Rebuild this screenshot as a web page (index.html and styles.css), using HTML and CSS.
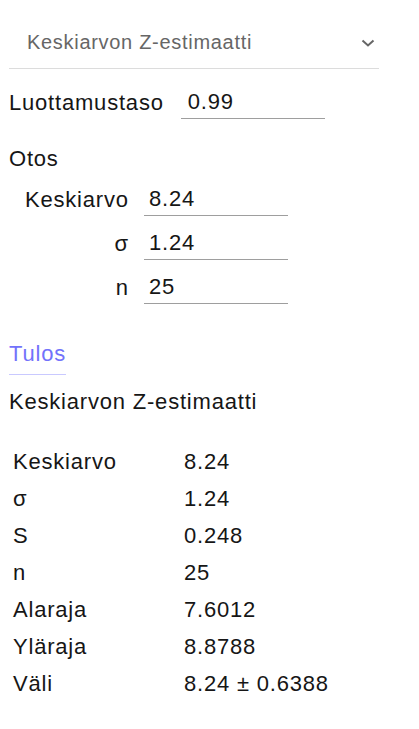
FILE: index.html
```html
<!DOCTYPE html>
<html lang="fi">
<head>
<meta charset="utf-8">
<title>Keskiarvon Z-estimaatti</title>
<link rel="stylesheet" href="styles.css">
</head>
<body>
<div class="app">
  <div class="select">
    <span class="select-text">Keskiarvon Z-estimaatti</span>
    <svg class="chevron" width="14" height="8" viewBox="0 0 14 8"><path d="M1.5 1.5 L7 6.5 L12.5 1.5" fill="none" stroke="#666" stroke-width="2"/></svg>
  </div>

  <div class="conf-row">
    <span class="label">Luottamustaso</span>
    <input class="field" type="text" value="0.99">
  </div>

  <div class="section-title">Otos</div>
  <div class="sample-grid">
    <span class="slabel">Keskiarvo</span>
    <input class="field" type="text" value="8.24">
    <span class="slabel">σ</span>
    <input class="field" type="text" value="1.24">
    <span class="slabel">n</span>
    <input class="field" type="text" value="25">
  </div>

  <div class="tab">Tulos</div>
  <div class="result-title">Keskiarvon Z-estimaatti</div>

  <table class="results">
    <tr><td>Keskiarvo</td><td>8.24</td></tr>
    <tr><td>σ</td><td>1.24</td></tr>
    <tr><td>S</td><td>0.248</td></tr>
    <tr><td>n</td><td>25</td></tr>
    <tr><td>Alaraja</td><td>7.6012</td></tr>
    <tr><td>Yläraja</td><td>8.8788</td></tr>
    <tr><td>Väli</td><td>8.24 ± 0.6388</td></tr>
  </table>
</div>
</body>
</html>
```
FILE: styles.css
```css
html, body {
  margin: 0;
  padding: 0;
  background: #fff;
}
body {
  font-family: "Liberation Sans", Arial, sans-serif;
  font-size: 22px;
  letter-spacing: 0.8px;
  color: #161616;
}
.app {
  width: 370px;
  padding: 0 9px;
}
.select {
  margin-top: 16px;
  height: 52px;
  border-bottom: 1px solid #dcdcdc;
  display: flex;
  align-items: center;
  justify-content: space-between;
  padding: 0 4px 0 18px;
}
.select-text {
  font-size: 20px;
  letter-spacing: 0.7px;
  color: #666;
  line-height: 24px;
}
.chevron {
  display: block;
  margin-top: 2px;
}
.conf-row {
  margin-top: 17px;
  display: flex;
  align-items: center;
  gap: 17px;
}
.label {
  line-height: 25px;
}
.field {
  box-sizing: border-box;
  width: 144px;
  height: 33px;
  margin: 0;
  padding: 0 0 0 7px;
  border: none;
  border-bottom: 1px solid #9e9e9e;
  font-family: inherit;
  font-size: 22px;
  letter-spacing: 0.8px;
  color: #161616;
  background: transparent;
  outline: none;
}
.sample-grid .field {
  padding-left: 5px;
}
.section-title {
  margin-top: 27px;
  line-height: 25px;
}
.sample-grid {
  margin-top: 12px;
  display: grid;
  grid-template-columns: 119px 144px;
  column-gap: 16px;
  row-gap: 11px;
  align-items: center;
}
.slabel {
  text-align: right;
  line-height: 25px;
  letter-spacing: 0.8px;
  margin-right: -0.8px;
}
.tab {
  display: inline-block;
  margin-top: 37px;
  line-height: 25px;
  padding-bottom: 8px;
  border-bottom: 1px solid #c9c9ff;
  color: #7272fb;
}
.result-title {
  margin-top: 14px;
  line-height: 25px;
}
.results {
  margin-top: 29px;
  border-collapse: collapse;
}
.results td {
  padding: 6px 4px;
  line-height: 25px;
  height: 25px;
}
.results td:first-child {
  width: 163px;
}
```
